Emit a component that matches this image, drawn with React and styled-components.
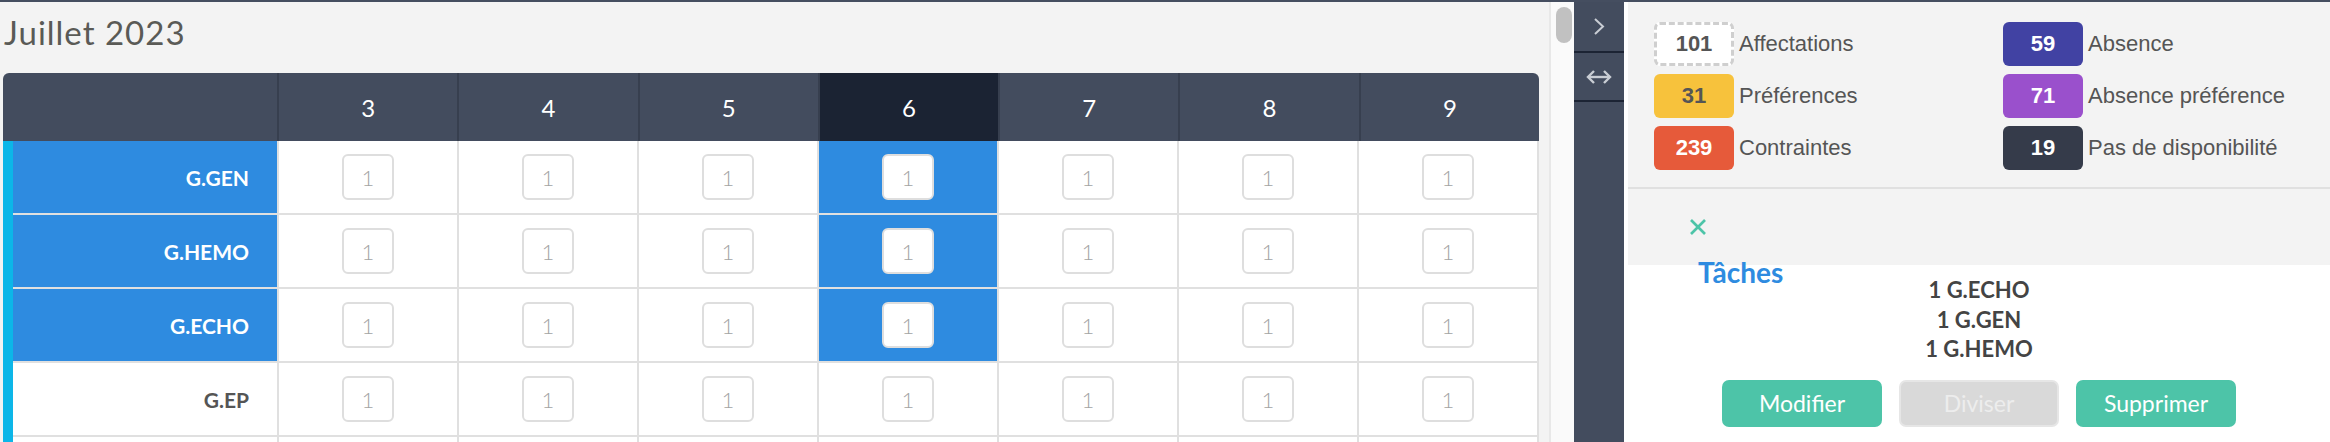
import React from "react";
import styled, { createGlobalStyle } from "styled-components";

const GlobalStyle = createGlobalStyle`
  html, body {
    margin: 0;
    padding: 0;
    overflow: hidden;
    font-family: Lato, "Open Sans", sans-serif;
  }
`;

const Page = styled.div`
  display: flex;
  height: 442px;
  border-top: 2px solid #454e60;
  box-sizing: border-box;
  overflow: hidden;
  background: #f3f3f3;
`;

const Main = styled.div`
  flex: none;
  width: 1549px;
  box-sizing: border-box;
  padding: 11px 10px 0 3px;
  background: #f3f3f3;
  overflow: hidden;
`;

const Title = styled.h1`
  margin: 0 0 22px 1px;
  font-size: 33px;
  line-height: 38px;
  font-weight: 400;
  letter-spacing: 1px;
  color: #5a5a56;
`;

const Table = styled.div`
  width: 1536px;
  border-radius: 6px 6px 0 0;
  overflow: hidden;
`;

const HeaderRow = styled.div`
  display: grid;
  grid-template-columns: 274px repeat(7, 1fr);
  height: 68px;
  background: #434c5e;
`;

const HeaderCell = styled.div`
  display: flex;
  align-items: center;
  justify-content: center;
  border-left: ${({ $first }) => ($first ? "none" : "2px solid #373f4f")};
  background: ${({ $selected }) => ($selected ? "#1b2333" : "transparent")};
  color: #fff;
  font-size: 24px;
`;

const Body = styled.div`
  border-left: 10px solid #0cb6e8;
  background: #fff;
`;

const BodyRow = styled.div`
  display: grid;
  grid-template-columns: 264px repeat(7, 1fr);
  height: 72px;
  border-bottom: 2px solid #e0e0e0;
  border-right: 2px solid #e0e0e0;
`;

const LabelCell = styled.div`
  display: flex;
  align-items: center;
  justify-content: flex-end;
  padding-right: 28px;
  background: ${({ $active }) => ($active ? "#2e8be0" : "#fff")};
  color: ${({ $active }) => ($active ? "#fff" : "#555")};
  font-size: 21px;
  font-weight: 700;
`;

const DayCell = styled.div`
  display: flex;
  align-items: center;
  justify-content: center;
  border-left: 2px solid #e0e0e0;
  background: ${({ $active }) => ($active ? "#2e8be0" : "#fff")};
`;

const CountBox = styled.div`
  display: flex;
  align-items: center;
  justify-content: center;
  width: 52px;
  height: 46px;
  box-sizing: border-box;
  border: 2px solid #dedede;
  border-radius: 6px;
  background: #fff;
  color: #a3a3a3;
  font-size: 22px;
  font-weight: 300;
`;

const Scrollbar = styled.div`
  flex: none;
  width: 25px;
  box-sizing: border-box;
  border-left: 2px solid #e8e8e8;
  background: #fafafa;
  padding: 5px 0 0 5px;
`;

const Thumb = styled.div`
  width: 16px;
  height: 36px;
  border-radius: 8px;
  background: #c1c1c1;
`;

const SideStrip = styled.div`
  flex: none;
  width: 50px;
  display: flex;
  flex-direction: column;
  background: #434c5e;
`;

const StripButton = styled.div`
  height: ${({ $h }) => $h}px;
  display: flex;
  align-items: center;
  justify-content: center;
  border-bottom: 2px solid #1c2434;
  color: #c9cdd4;
`;

const Panel = styled.div`
  flex: 1;
  display: flex;
  flex-direction: column;
  border-left: 4px solid #fff;
  background: #fff;
`;

const Legend = styled.div`
  display: grid;
  grid-template-columns: 349px 1fr;
  row-gap: 8px;
  padding: 20px 0 17px 26px;
  background: #f3f3f3;
  border-bottom: 2px solid #e0e0e0;
`;

const LegendItem = styled.div`
  display: flex;
  align-items: center;
  gap: 5px;
`;

const Badge = styled.div`
  width: 80px;
  height: 44px;
  box-sizing: border-box;
  display: flex;
  align-items: center;
  justify-content: center;
  border-radius: 6px;
  border: ${({ $dashed }) => ($dashed ? "3px dashed #cfcfcf" : "none")};
  background: ${({ $bg }) => $bg};
  color: ${({ $fg }) => $fg};
  font-family: "Liberation Sans", Arial, sans-serif;
  font-weight: 700;
  font-size: 22px;
`;

const LegendLabel = styled.span`
  font-family: "Liberation Sans", Arial, sans-serif;
  font-size: 22px;
  color: #555;
`;

const CloseBar = styled.div`
  height: 76px;
  display: flex;
  align-items: center;
  padding-left: 61px;
  background: #f3f3f3;
`;

const Tasks = styled.div`
  display: flex;
  flex-direction: column;
  background: #fff;
`;

const Overlap = styled.div`
  display: grid;
`;

const TasksTitle = styled.h2`
  grid-area: 1 / 1;
  justify-self: start;
  margin: -7px 0 0 70px;
  font-size: 28px;
  line-height: 28px;
  font-weight: 700;
  color: #2e8be0;
`;

const TaskList = styled.div`
  grid-area: 1 / 1;
  justify-self: center;
  margin-top: 10px;
  text-align: center;
  font-size: 22px;
  line-height: 29.5px;
  font-weight: 700;
  color: #444;
`;

const ButtonRow = styled.div`
  display: flex;
  justify-content: center;
  gap: 17px;
  margin-top: 16px;
`;

const Button = styled.button`
  width: 160px;
  height: 47px;
  box-sizing: border-box;
  border-radius: 7px;
  border: ${({ disabled }) => (disabled ? "2px solid #e6e6e6" : "none")};
  background: ${({ disabled }) => (disabled ? "#d9d9d9" : "#4dc4a8")};
  color: ${({ disabled }) => (disabled ? "#ededed" : "#fff")};
  font-family: Lato, sans-serif;
  font-size: 23px;
  padding: 0;
`;

const days = [3, 4, 5, 6, 7, 8, 9];
const selectedDay = 6;

const rows = [
  { label: "G.GEN", active: true },
  { label: "G.HEMO", active: true },
  { label: "G.ECHO", active: true },
  { label: "G.EP", active: false },
  { label: "G.CONS", active: false },
];

const legend = [
  { n: 101, label: "Affectations", bg: "#fff", fg: "#555", dashed: true },
  { n: 59, label: "Absence", bg: "#4142a3", fg: "#fff" },
  { n: 31, label: "Préférences", bg: "#f7c23c", fg: "#555" },
  { n: 71, label: "Absence préférence", bg: "#9a50cc", fg: "#fff" },
  { n: 239, label: "Contraintes", bg: "#e65a3a", fg: "#fff" },
  { n: 19, label: "Pas de disponibilité", bg: "#353b4a", fg: "#fff" },
];

const tasks = ["1 G.ECHO", "1 G.GEN", "1 G.HEMO"];

const Chevron = () => (
  <svg width="12" height="19" viewBox="0 0 12 19">
    <polyline points="2,2 10,9.5 2,17" fill="none" stroke="currentColor" strokeWidth="2" />
  </svg>
);

const Swap = () => (
  <svg width="28" height="16" viewBox="0 0 28 16">
    <g fill="none" stroke="currentColor" strokeWidth="2.4">
      <line x1="3" y1="8" x2="25" y2="8" />
      <polyline points="9,2 3,8 9,14" />
      <polyline points="19,2 25,8 19,14" />
    </g>
  </svg>
);

const CloseIcon = () => (
  <svg width="18" height="18" viewBox="0 0 18 18">
    <g stroke="#4dc4a8" strokeWidth="2.6">
      <line x1="2" y1="2" x2="16" y2="16" />
      <line x1="16" y1="2" x2="2" y2="16" />
    </g>
  </svg>
);

const App = () => (
  <Page>
    <GlobalStyle />
    <Main>
      <Title>Juillet 2023</Title>
      <Table>
        <HeaderRow>
          <HeaderCell $first />
          {days.map((d) => (
            <HeaderCell key={d} $selected={d === selectedDay}>
              {d}
            </HeaderCell>
          ))}
        </HeaderRow>
        <Body>
          {rows.map((row) => (
            <BodyRow key={row.label}>
              <LabelCell $active={row.active}>{row.label}</LabelCell>
              {days.map((d) => (
                <DayCell key={d} $active={row.active && d === selectedDay}>
                  <CountBox>1</CountBox>
                </DayCell>
              ))}
            </BodyRow>
          ))}
        </Body>
      </Table>
    </Main>
    <Scrollbar>
      <Thumb />
    </Scrollbar>
    <SideStrip>
      <StripButton $h={49}>
        <Chevron />
      </StripButton>
      <StripButton $h={47}>
        <Swap />
      </StripButton>
    </SideStrip>
    <Panel>
      <Legend>
        {legend.map((item) => (
          <LegendItem key={item.label}>
            <Badge $bg={item.bg} $fg={item.fg} $dashed={item.dashed}>
              {item.n}
            </Badge>
            <LegendLabel>{item.label}</LegendLabel>
          </LegendItem>
        ))}
      </Legend>
      <CloseBar>
        <CloseIcon />
      </CloseBar>
      <Tasks>
        <Overlap>
          <TasksTitle>Tâches</TasksTitle>
          <TaskList>
            {tasks.map((t) => (
              <div key={t}>{t}</div>
            ))}
          </TaskList>
        </Overlap>
        <ButtonRow>
          <Button>Modifier</Button>
          <Button disabled>Diviser</Button>
          <Button>Supprimer</Button>
        </ButtonRow>
      </Tasks>
    </Panel>
  </Page>
);

export default App;
